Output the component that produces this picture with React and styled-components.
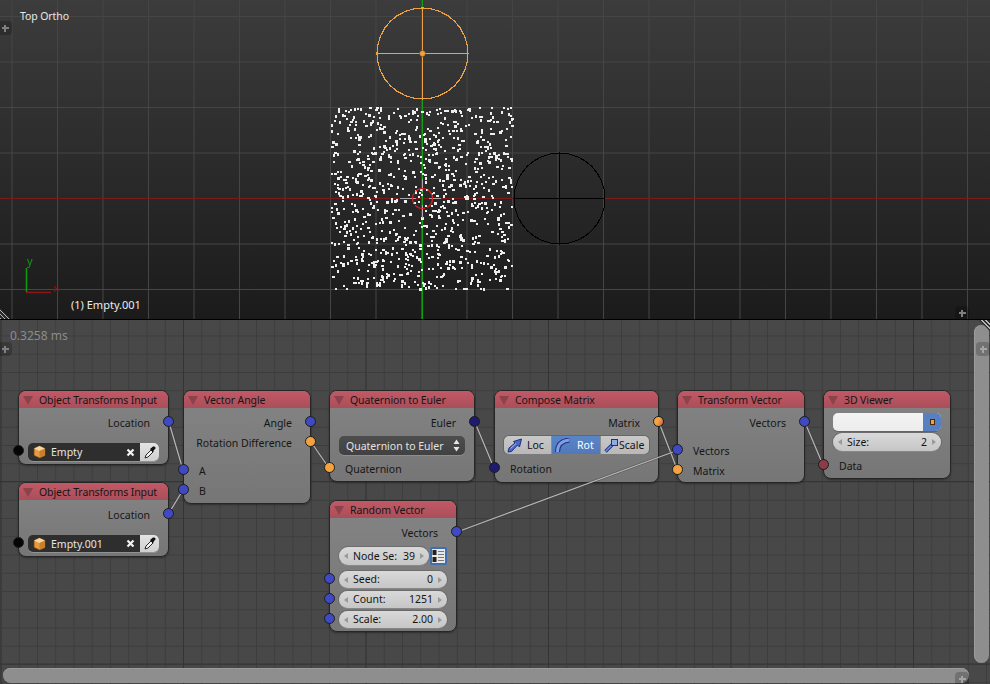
import React, { useMemo } from 'react';
import styled, { createGlobalStyle } from 'styled-components';

const Global = createGlobalStyle`
  html, body { margin: 0; padding: 0; background: #484848; overflow: hidden; }
  * { box-sizing: border-box; }
  body { font-family: "Noto Sans", "Open Sans", sans-serif; font-size: 11px; }
`;

const Page = styled.div`
  width: 990px;
  height: 684px;
  display: flex;
  flex-direction: column;
  position: relative;
  overflow: hidden;
`;

// 3D viewport
const Viewport = styled.section`
  position: relative;
  flex: 0 0 320px;
  border-bottom: 1px solid #000;
  background-color: #2c2c2c;
  background-image:
    linear-gradient(to right, #454545 1px, transparent 1px),
    linear-gradient(to bottom, #454545 1px, transparent 1px),
    linear-gradient(to bottom, #3c3c3c, #1b1b1b);
  background-size: 45.5px 45.5px, 45.5px 45.5px, 100% 100%;
  background-position: 11.5px 0, 0 16px, 0 0;
`;

const Scene = styled.svg`
  position: absolute;
  inset: 0;
  width: 990px;
  height: 319px;
`;

const ViewTitle = styled.div`
  position: absolute;
  left: 20px;
  top: 9px;
  color: #e8e8e8;
  font-size: 10.5px;
  letter-spacing: -0.1px;
  line-height: 15px;
`;

const ObjectName = styled.div`
  position: absolute;
  left: 71px;
  top: 297px;
  color: #ececec;
  line-height: 15px;
`;

const AxisLabel = styled.span`
  position: absolute;
  left: ${(p) => p.$x}px;
  top: ${(p) => p.$y}px;
  color: ${(p) => p.$color};
  line-height: 12px;
  font-size: 11px;
`;

const Chip = styled.div`
  position: absolute;
  left: ${(p) => p.$x}px;
  top: ${(p) => p.$y}px;
  width: 14px;
  height: 14px;
  border-radius: 4px;
  z-index: 5;
  background-color: rgba(0, 0, 0, 0.2);
  background-image:
    linear-gradient(${(p) => p.$plus || '#808080'}, ${(p) => p.$plus || '#808080'}),
    linear-gradient(${(p) => p.$plus || '#808080'}, ${(p) => p.$plus || '#808080'});
  background-repeat: no-repeat;
  background-size: 7px 2px, 2px 7px;
  background-position: center, center;
`;

const Hatch = styled.div`
  position: absolute;
  left: ${(p) => p.$x}px;
  top: ${(p) => p.$y}px;
  width: 11px;
  height: 11px;
  z-index: 5;
  clip-path: ${(p) =>
    p.$corner === 'bl' ? 'polygon(0 0, 100% 100%, 0 100%)' : 'polygon(0 0, 100% 0, 100% 100%)'};
  background: repeating-linear-gradient(45deg, #b8b8b8 0 1px, #2a2a2a 1px 3px);
`;

// node editor
const Editor = styled.section`
  position: relative;
  flex: 1;
  background-color: #484848;
  background-image:
    linear-gradient(to right, #343434 1px, transparent 1px),
    linear-gradient(to bottom, #343434 1px, transparent 1px),
    linear-gradient(to right, #3d3d3d 1px, transparent 1px),
    linear-gradient(to bottom, #3d3d3d 1px, transparent 1px);
  background-size: 182.5px 182.5px, 182.5px 182.5px, 18.25px 18.25px, 18.25px 18.25px;
  background-position: 0.5px 0, 0 161px, 0.5px 0, 0 15.5px;
`;

const Timing = styled.div`
  position: absolute;
  left: 10px;
  top: 8px;
  color: #8c8c8c;
  font-size: 12px;
  line-height: 15px;
`;

const Links = styled.svg`
  position: absolute;
  inset: 0;
  width: 990px;
  height: 364px;
  z-index: 2;
  pointer-events: none;
`;

const Node = styled.div`
  position: absolute;
  left: ${(p) => p.$x}px;
  top: ${(p) => p.$y}px;
  width: ${(p) => p.$w}px;
  height: ${(p) => p.$h}px;
  display: flex;
  flex-direction: column;
  border: 1px solid #262626;
  border-radius: 8px;
  background: linear-gradient(to bottom, #848484, #767676);
  box-shadow: 0 1px 2px rgba(0, 0, 0, 0.35);
  color: #161616;
  font-size: 10.5px;
`;

const Header = styled.header`
  flex: 0 0 17px;
  display: flex;
  align-items: center;
  gap: 6px;
  padding: 1px 0 0 4px;
  border-radius: 7px 7px 0 0;
  background: linear-gradient(to bottom, #c25866, #a94f59);
  letter-spacing: -0.1px;
  line-height: 16px;
  white-space: nowrap;
`;

const Triangle = styled.i`
  width: 0;
  height: 0;
  border-left: 5px solid transparent;
  border-right: 5px solid transparent;
  border-top: 9px solid #8b434b;
`;

const NodeBody = styled.div`
  flex: 1;
  display: flex;
  flex-direction: column;
  padding-top: 5px;
`;

const Row = styled.div`
  position: relative;
  flex: 0 0 20px;
  display: flex;
  align-items: center;
  justify-content: ${(p) => (p.$out ? 'flex-end' : 'flex-start')};
  margin-top: ${(p) => p.$mt || 0}px;
  padding: ${(p) => (p.$out ? '0 18px 0 0' : '0 0 0 15px')};
  white-space: nowrap;
`;

const WidgetRow = styled.div`
  position: relative;
  flex: 0 0 ${(p) => p.$h || 18}px;
  display: flex;
  margin-top: ${(p) => p.$mt || 0}px;
  padding: 0 9px;
`;

const socketColors = {
  blue: '#3f49c4',
  orange: '#f2a33f',
  navy: '#1d1a72',
  black: '#050505',
  maroon: '#8c3b48',
  matrix: 'linear-gradient(120deg, #f4a53e 45%, #cc5260)',
};

const Socket = styled.span`
  position: absolute;
  top: 50%;
  width: 11px;
  height: 11px;
  margin-top: -7px;
  border-radius: 50%;
  border: 1px solid #1c1c1c;
  z-index: 3;
  background: ${(p) => socketColors[p.$color]};
  ${(p) => (p.$out ? 'right: -6px;' : 'left: -6px;')}
`;

const ObjectField = styled.div`
  flex: 1;
  display: flex;
  align-items: center;
  border-radius: 5px;
  overflow: hidden;
  background: #2e2e2e;
  color: #e6e6e6;
  box-shadow: 0 1px 0 rgba(255, 255, 255, 0.2);
`;

const FieldName = styled.span`
  flex: 1;
  padding-left: 5px;
  white-space: nowrap;
`;

const CubeWrap = styled.span`
  display: flex;
  margin-left: 5px;
`;

const ClearWrap = styled.span`
  display: flex;
  margin-right: 5px;
`;

const PickerButton = styled.span`
  flex: 0 0 19px;
  align-self: stretch;
  display: flex;
  align-items: center;
  justify-content: center;
  background: linear-gradient(to bottom, #e4e4e4, #cfcfcf);
`;

const Dropdown = styled.div`
  flex: 1;
  display: flex;
  align-items: center;
  justify-content: space-between;
  padding: 0 5px 0 7px;
  border-radius: 5px;
  background: linear-gradient(to bottom, #4d4d4d, #414141);
  color: #e2e2e2;
  box-shadow: 0 1px 0 rgba(255, 255, 255, 0.15);
  white-space: nowrap;
`;

const Toggle = styled.div`
  flex: 1;
  display: grid;
  grid-template-columns: 47px 49px 1fr;
  border-radius: 5px;
  overflow: hidden;
  box-shadow: 0 1px 0 rgba(255, 255, 255, 0.15), 0 0 0 1px rgba(60, 60, 60, 0.35);
`;

const ToggleButton = styled.div`
  display: flex;
  align-items: center;
  gap: ${(p) => p.$gap}px;
  padding-left: 3px;
  background: ${(p) =>
    p.$active ? 'linear-gradient(to bottom, #5a85c6, #5079bb)' : 'linear-gradient(to bottom, #c9c9c9, #b8b8b8)'};
  color: ${(p) => (p.$active ? '#fff' : '#141414')};
  border-left: ${(p) => (p.$first ? 'none' : '1px solid #8e8e8e')};
`;

const Pill = styled.div`
  flex: 1;
  display: flex;
  align-items: center;
  justify-content: space-between;
  padding: 0 14px 1px;
  position: relative;
  border-radius: 9px;
  background: linear-gradient(to bottom, #d9d9d9, #c6c6c6);
  color: #151515;
  white-space: nowrap;
  box-shadow: 0 1px 0 rgba(255, 255, 255, 0.2), 0 0 0 1px rgba(70, 70, 70, 0.3);
  &::before,
  &::after {
    content: '';
    position: absolute;
    top: 50%;
    margin-top: -3px;
    border-top: 3px solid transparent;
    border-bottom: 3px solid transparent;
  }
  &::before {
    left: 5px;
    border-right: 4px solid #9a9a9a;
  }
  &::after {
    right: 5px;
    border-left: 4px solid #9a9a9a;
  }
`;

const ListButton = styled.span`
  flex: 0 0 17px;
  margin-left: 1px;
  display: flex;
  align-items: center;
  justify-content: center;
  background: #e8e8e8;
  border: 2px solid #3e6fb4;
  border-radius: 2px;
`;

const EmptyInput = styled.div`
  flex: 1;
  display: flex;
  border-radius: 5px;
  overflow: hidden;
  background: linear-gradient(to bottom, #f4f4f4, #ececec);
  box-shadow: 0 1px 0 rgba(60, 60, 60, 0.4);
`;

const EmptyPick = styled.span`
  margin-left: auto;
  flex: 0 0 18px;
  display: flex;
  align-items: center;
  justify-content: center;
  background: #5680c2;
`;

const Dot = styled.i`
  width: 5px;
  height: 6px;
  border: 1px solid #4a2b10;
  background: #f3a03c;
`;

const VScroll = styled.div`
  position: absolute;
  left: 974px;
  top: 5px;
  width: 15px;
  height: 338px;
  border-radius: 8px;
  background: #8e8e8e;
  box-shadow: inset 1px 0 0 #9c9c9c;
  z-index: 4;
`;

const HScroll = styled.div`
  position: absolute;
  left: 3px;
  top: 348px;
  width: 966px;
  height: 15px;
  border-radius: 8px;
  background: #8e8e8e;
  box-shadow: inset 0 1px 0 #9c9c9c;
  z-index: 4;
`;

const Cube = () => (
  <svg width="13" height="14" viewBox="0 0 13 14">
    <polygon points="6.5,1 12,3.5 12,10.5 6.5,13 1,10.5 1,3.5" fill="#e79a40" stroke="#6e4519" strokeWidth="0.8" />
    <polygon points="6.5,1 12,3.5 6.5,6 1,3.5" fill="#f8d6a4" />
    <polygon points="6.5,6 12,3.5 12,10.5 6.5,13" fill="#c97f2c" />
  </svg>
);

const Clear = () => (
  <svg width="9" height="9" viewBox="0 0 9 9">
    <path d="M1.5 1.5 L7.5 7.5 M7.5 1.5 L1.5 7.5" stroke="#f2f2f2" strokeWidth="2.2" />
  </svg>
);

const Dropper = () => (
  <svg width="14" height="15" viewBox="0 0 14 15">
    <path d="M2 13 L3 10 L8 5 L10 7 L5 12 Z" fill="#f4f4f4" stroke="#2a2a2a" strokeWidth="1" />
    <path d="M7 4 L10 1.5 Q12 1 12.5 2.5 Q13 3.5 11 5 L10 7.5 Z" fill="#111" />
  </svg>
);

const UpDown = () => (
  <svg width="7" height="13" viewBox="0 0 7 13">
    <path d="M3.5 0.5 L6.5 5 L0.5 5 Z M3.5 12.5 L0.5 8 L6.5 8 Z" fill="#e6e6e6" />
  </svg>
);

const LocIcon = () => (
  <svg width="16" height="15" viewBox="0 0 16 15">
    <path d="M1 14 L2 10 L8 5 L6.5 3.5 L14.5 1 L12.5 9 L10.5 7 L4.5 13.5 Z" fill="#4b68c8" stroke="#1f2f7c" strokeWidth="1" />
    <path d="M3.5 10.5 L9 5.5" stroke="#a9bdf0" strokeWidth="1" />
  </svg>
);

const RotIcon = () => (
  <svg width="16" height="15" viewBox="0 0 16 15">
    <path d="M2.5 14 Q2.5 3 14.5 2" fill="none" stroke="#1f2f7c" strokeWidth="5" />
    <path d="M2.5 14 Q2.5 3 14.5 2" fill="none" stroke="#7f9de6" strokeWidth="3" />
  </svg>
);

const ScaleIcon = () => (
  <svg width="15" height="15" viewBox="0 0 15 15">
    <path d="M1.5 13.5 L8 7" stroke="#1f2f7c" strokeWidth="3.4" />
    <path d="M1.5 13.5 L8 7" stroke="#6f8fe0" strokeWidth="1.6" />
    <rect x="7.5" y="1.5" width="6" height="6" fill="#8fa9ea" stroke="#1f2f7c" strokeWidth="1" />
  </svg>
);

const ListIcon = () => (
  <svg width="13" height="14" viewBox="0 0 13 14">
    <rect x="0.5" y="1" width="4" height="5" fill="#222" />
    <rect x="0.5" y="8" width="4" height="5" fill="#222" />
    <path d="M6 2.5 H12 M6 5.5 H12 M6 8.5 H12 M6 11.5 H12" stroke="#777" strokeWidth="1" />
  </svg>
);

// 32 sided polygon like blender's empty sphere
const ring = (cx, cy, r) =>
  Array.from({ length: 32 }, (_, i) => {
    const a = (i / 32) * Math.PI * 2;
    return `${(cx + Math.cos(a) * r).toFixed(1)},${(cy + Math.sin(a) * r).toFixed(1)}`;
  }).join(' ');

const makePoints = (count) => {
  let seed = 39;
  const rnd = () => {
    seed = (seed * 16807) % 2147483647;
    return seed / 2147483647;
  };
  return Array.from({ length: count }, () => ({
    x: Math.floor(331 + rnd() * 181),
    y: Math.floor(107 + rnd() * 182),
    w: rnd() > 0.75 ? 3 : 2,
    h: rnd() > 0.75 ? 3 : 2,
  }));
};

const SceneDrawing = () => {
  const points = useMemo(() => makePoints(950), []);
  return (
    <Scene viewBox="0 0 990 319">
      <line x1="0" y1="198.5" x2="990" y2="198.5" stroke="#7f1a1a" />
      <line x1="422.5" y1="0" x2="422.5" y2="319" stroke="#12a012" />
      {points.map((p, i) => (
        <rect key={i} x={p.x} y={p.y} width={p.w} height={p.h} fill="#efefef" />
      ))}
      <polygon points={ring(559.5, 198.5, 45.5)} fill="none" stroke="#000" shapeRendering="crispEdges" />
      <path d="M559.5 153 V244 M514 198.5 H605" stroke="#000" shapeRendering="crispEdges" />
      <polygon points={ring(422.5, 53.5, 45.5)} fill="none" stroke="#f0a040" strokeWidth="1.2" shapeRendering="crispEdges" />
      <path d="M422.5 8 V99 M377 53.5 H468" stroke="#f0a040" shapeRendering="crispEdges" />
      <circle cx="422.5" cy="53.5" r="3" fill="#f0a040" stroke="#5a3a10" strokeWidth="0.5" />
      <path d="M422.5 179 V192 M422.5 205 V218 M400 198.5 H416 M429 198.5 H441" stroke="#a8a8a8" />
      <circle cx="422.5" cy="198.5" r="10" fill="none" stroke="#e02020" strokeWidth="1.2" strokeDasharray="11 2" />
      <path d="M26.5 268 V292" stroke="#0f9a0f" strokeWidth="1.5" />
      <path d="M26 292.5 H51" stroke="#8a1616" strokeWidth="1.5" />
    </Scene>
  );
};

const linkLines = [
  [169, 102.5, 183, 150],
  [169, 193, 183, 170],
  [311, 122, 329, 148],
  [475, 102.5, 494, 148],
  [659, 102.5, 677, 149],
  [457, 212, 677, 130.5],
  [805, 102.5, 823, 145],
];

const LinkLayer = () => (
  <Links viewBox="0 0 990 364">
    {linkLines.map(([x1, y1, x2, y2], i) => (
      <g key={i}>
        <line x1={x1} y1={y1} x2={x2} y2={y2} stroke="#3a3a3a" strokeOpacity="0.4" strokeWidth="2.6" />
        <line x1={x1} y1={y1} x2={x2} y2={y2} stroke="#b6b6b6" strokeWidth="1.2" />
      </g>
    ))}
  </Links>
);

const NodeTitle = ({ children }) => (
  <Header>
    <Triangle />
    <span>{children}</span>
  </Header>
);

const TransformsNode = ({ y, name, fieldH }) => (
  <Node $x={18} $y={y} $w={151} $h={75}>
    <NodeTitle>Object Transforms Input</NodeTitle>
    <NodeBody>
      <Row $out>
        Location
        <Socket $out $color="blue" />
      </Row>
      <WidgetRow $mt={10} $h={fieldH}>
        <Socket $color="black" />
        <ObjectField>
          <CubeWrap><Cube /></CubeWrap>
          <FieldName>{name}</FieldName>
          <ClearWrap><Clear /></ClearWrap>
          <PickerButton><Dropper /></PickerButton>
        </ObjectField>
      </WidgetRow>
    </NodeBody>
  </Node>
);

const NumberRow = ({ label, value, mt }) => (
  <WidgetRow $h={17} $mt={mt}>
    <Socket $color="blue" />
    <Pill>
      <span>{label}</span>
      <span>{value}</span>
    </Pill>
  </WidgetRow>
);

export default function App() {
  return (
    <Page>
      <Global />
      <Viewport>
        <SceneDrawing />
        <ViewTitle>Top Ortho</ViewTitle>
        <AxisLabel $x={27} $y={255} $color="#0f9a0f">y</AxisLabel>
        <AxisLabel $x={53} $y={282} $color="#8a1616">x</AxisLabel>
        <ObjectName>(1) Empty.001</ObjectName>
        <Chip $x={-2} $y={21} />
        <Chip $x={955} $y={306} />
        <Hatch $x={0} $y={308} $corner="bl" />
      </Viewport>
      <Editor>
        <Timing>0.3258 ms</Timing>
        <LinkLayer />

        <TransformsNode y={70} name="Empty" />
        <TransformsNode y={162} name="Empty.001" fieldH={17} />

        <Node $x={183} $y={70} $w={128} $h={114}>
          <NodeTitle>Vector Angle</NodeTitle>
          <NodeBody>
            <Row $out>Angle<Socket $out $color="blue" /></Row>
            <Row $out>Rotation Difference<Socket $out $color="orange" /></Row>
            <Row $mt={8}>A<Socket $color="blue" /></Row>
            <Row>B<Socket $color="blue" /></Row>
          </NodeBody>
        </Node>

        <Node $x={329} $y={70} $w={146} $h={92}>
          <NodeTitle>Quaternion to Euler</NodeTitle>
          <NodeBody>
            <Row $out>Euler<Socket $out $color="navy" /></Row>
            <WidgetRow $h={19} $mt={3}>
              <Dropdown>Quaternion to Euler<UpDown /></Dropdown>
            </WidgetRow>
            <Row $mt={4}>Quaternion<Socket $color="orange" /></Row>
          </NodeBody>
        </Node>

        <Node $x={494} $y={70} $w={165} $h={93}>
          <NodeTitle>Compose Matrix</NodeTitle>
          <NodeBody>
            <Row $out>Matrix<Socket $out $color="matrix" /></Row>
            <WidgetRow $mt={3}>
              <Toggle>
                <ToggleButton $first $gap={4}><LocIcon />Loc</ToggleButton>
                <ToggleButton $active $gap={6}><RotIcon />Rot</ToggleButton>
                <ToggleButton $gap={0}><ScaleIcon />Scale</ToggleButton>
              </Toggle>
            </WidgetRow>
            <Row $mt={5}>Rotation<Socket $color="navy" /></Row>
          </NodeBody>
        </Node>

        <Node $x={329} $y={180} $w={128} $h={132}>
          <NodeTitle>Random Vector</NodeTitle>
          <NodeBody>
            <Row $out>Vectors<Socket $out $color="blue" /></Row>
            <WidgetRow $h={17} $mt={4}>
              <Pill>
                <span>Node Se:</span>
                <span>39</span>
              </Pill>
              <ListButton><ListIcon /></ListButton>
            </WidgetRow>
            <NumberRow label="Seed:" value="0" mt={6} />
            <NumberRow label="Count:" value="1251" mt={3} />
            <NumberRow label="Scale:" value="2.00" mt={3} />
          </NodeBody>
        </Node>

        <Node $x={677} $y={70} $w={128} $h={93}>
          <NodeTitle>Transform Vector</NodeTitle>
          <NodeBody>
            <Row $out>Vectors<Socket $out $color="blue" /></Row>
            <Row $mt={8}>Vectors<Socket $color="blue" /></Row>
            <Row>Matrix<Socket $color="orange" /></Row>
          </NodeBody>
        </Node>

        <Node $x={823} $y={70} $w={128} $h={89}>
          <NodeTitle>3D Viewer</NodeTitle>
          <NodeBody>
            <WidgetRow>
              <EmptyInput>
                <EmptyPick><Dot /></EmptyPick>
              </EmptyInput>
            </WidgetRow>
            <WidgetRow $mt={2}>
              <Pill>
                <span>Size:</span>
                <span>2</span>
              </Pill>
            </WidgetRow>
            <Row $mt={5}>Data<Socket $color="maroon" /></Row>
          </NodeBody>
        </Node>

        <VScroll />
        <HScroll />
        <Chip $x={-2} $y={22} />
        <Chip $x={976} $y={22} $plus="#a4a4a4" />
        <Chip $x={955} $y={352} $plus="#a4a4a4" />
        <Hatch $x={979} $y={0} $corner="tr" />
      </Editor>
    </Page>
  );
}
